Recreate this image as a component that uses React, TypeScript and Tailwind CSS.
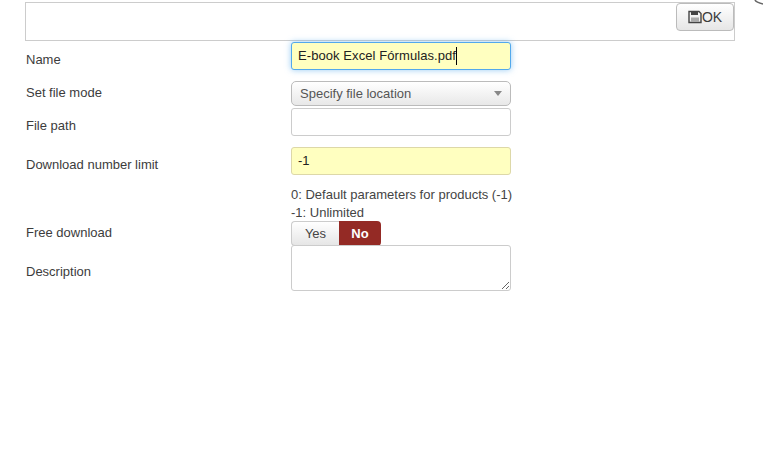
function SaveIcon() {
  return (
    <svg width="14" height="14" viewBox="0 0 14 14" className="shrink-0 text-[#444]">
      <path
        d="M1 1.5h10l2 2v9H1z"
        fill="none"
        stroke="currentColor"
        strokeWidth="1.4"
      />
      <rect x="3" y="1.5" width="7" height="3.5" fill="currentColor" />
      <rect x="3" y="7.5" width="8" height="4.5" fill="#aaa" />
    </svg>
  );
}

function Row({ label, labelClass, className, children }: { label: string; labelClass: string; className: string; children: React.ReactNode }) {
  return (
    <div className={`flex items-start ${className}`}>
      <div className={`w-[265px] shrink-0 leading-[18px] ${labelClass}`}>{label}</div>
      <div className="w-[220px] shrink-0">{children}</div>
    </div>
  );
}

export default function App() {
  return (
    <main className="relative w-[763px] h-[455px] overflow-hidden bg-white text-[13px] text-[#3c3c3c] font-['Liberation_Sans',Arial,sans-serif]">
      {/* corner of the modal close button */}
      <svg width="9" height="5" viewBox="0 0 9 5" className="absolute top-0 right-0">
        <path d="M1 0c1 2 3 3 8 4" fill="none" stroke="#666" strokeWidth="1.6" />
      </svg>

      <div className="pt-[2px] pl-[25px]">
        {/* Toolbar */}
        <div className="w-[710px] h-[39px] border border-[#ccc] flex justify-end items-start">
          <button className="w-[58px] h-[28px] border border-[#bbb] rounded-[4px] bg-gradient-to-b from-white to-[#e6e6e6] flex items-center justify-center text-[14px] leading-none">
            <SaveIcon />
            <span>OK</span>
          </button>
        </div>

        {/* Form */}
        <div className="pl-[1px]">
          <Row label="Name" labelClass="pt-[9px]" className="mt-[1px]">
            <div className="h-[28px] border border-[#52a8ec] rounded-[3px] bg-[#ffffc0] shadow-[0_0_6px_rgba(82,168,236,0.6)] px-[6px] flex items-center text-[#222]">
              <span className="border-r border-black leading-[18px] tracking-[0.08px]">E-book Excel Fórmulas.pdf</span>
            </div>
          </Row>

          <Row label="Set file mode" labelClass="pt-[3px]" className="mt-[11px]">
            <div className="h-[25px] border border-[#bbb] rounded-[5px] bg-gradient-to-b from-white to-[#e8e8e8] pl-[8px] pr-[8px] flex items-center justify-between text-[#555]">
              <span>Specify file location</span>
              <span className="w-0 h-0 border-x-[4px] border-x-transparent border-t-[5px] border-t-[#888]" />
            </div>
          </Row>

          <Row label="File path" labelClass="pt-[9px]" className="mt-[2px]">
            <input className="block w-full h-[28px] border border-[#ccc] rounded-[3px] bg-white px-[6px] outline-none" />
          </Row>

          <Row label="Download number limit" labelClass="pt-[9px]" className="mt-[11px]">
            <div className="h-[28px] border border-[#ddd8a8] rounded-[3px] bg-[#ffffc0] px-[6px] flex items-center text-[#222]">-1</div>
          </Row>

          <Row label="" labelClass="" className="mt-[11px]">
            <div className="leading-[18px] whitespace-nowrap text-[#444]">
              <div>0: Default parameters for products (-1)</div>
              <div>-1: Unlimited</div>
            </div>
          </Row>

          <Row label="Free download" labelClass="pt-[3px]" className="-mt-[1px]">
            <div className="flex h-[25px] w-[90px]">
              <div className="w-[48px] border border-[#ccc] border-r-0 rounded-l-[4px] bg-gradient-to-b from-white to-[#e6e6e6] flex items-center justify-center text-[#444]">Yes</div>
              <div className="w-[42px] rounded-r-[4px] bg-[#942a25] text-white font-bold flex items-center justify-center">No</div>
            </div>
          </Row>

          <Row label="Description" labelClass="pt-[18px]" className="-mt-[1px]">
            <textarea className="block w-full h-[46px] border border-[#ccc] rounded-[3px] bg-white px-[6px] outline-none resize" />
          </Row>
        </div>
      </div>
    </main>
  );
}
